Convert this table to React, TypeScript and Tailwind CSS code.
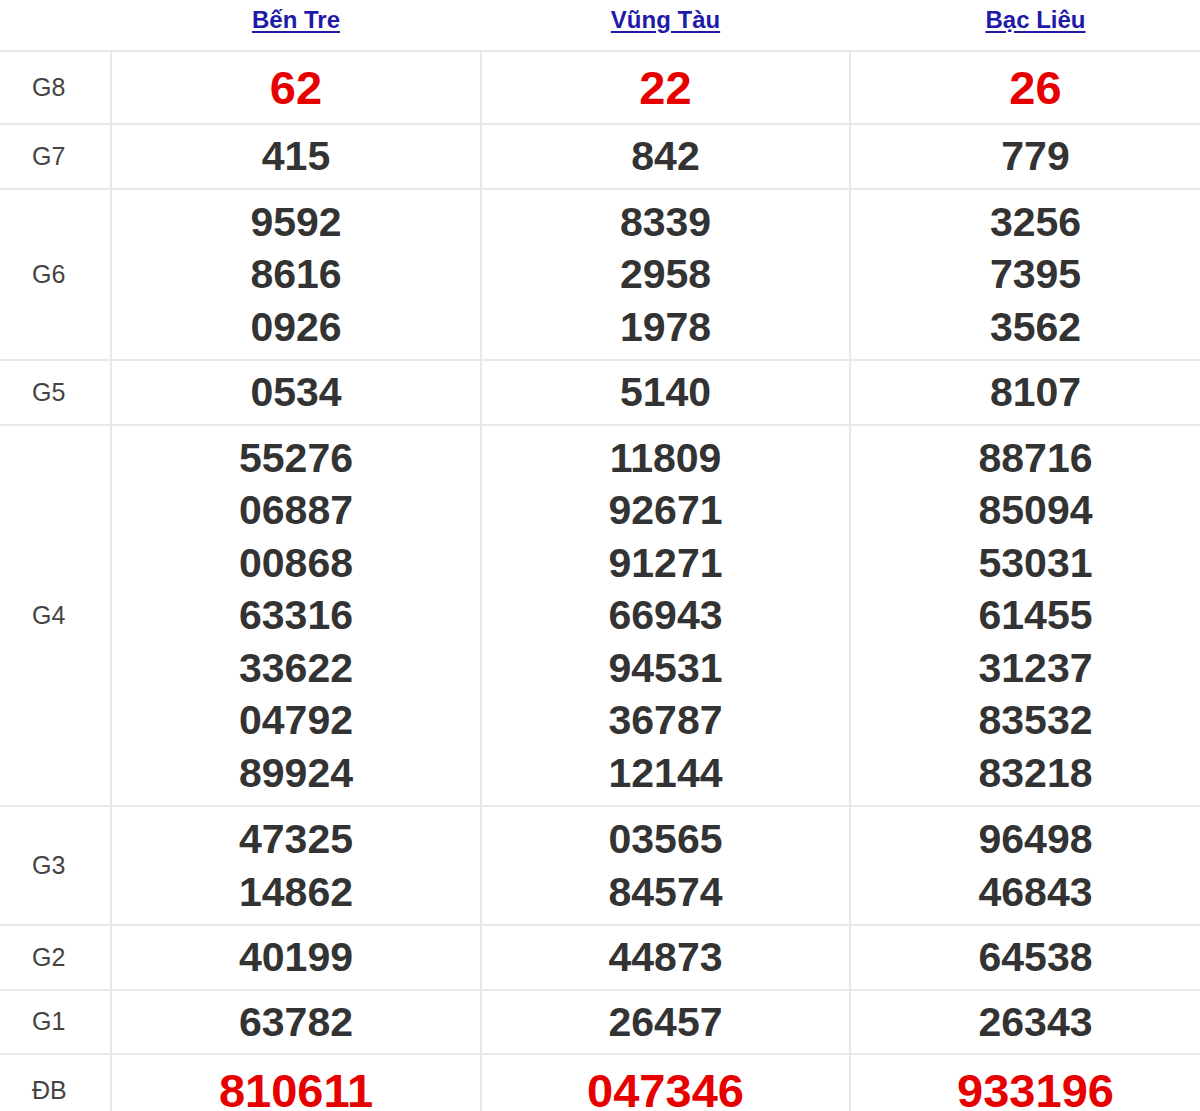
const provinces = ["Bến Tre", "Vũng Tàu", "Bạc Liêu"];

type Prize = { label: string; values: string[][]; big?: boolean };

const prizes: Prize[] = [
  { label: "G8", values: [["62"], ["22"], ["26"]], big: true },
  { label: "G7", values: [["415"], ["842"], ["779"]] },
  {
    label: "G6",
    values: [
      ["9592", "8616", "0926"],
      ["8339", "2958", "1978"],
      ["3256", "7395", "3562"],
    ],
  },
  { label: "G5", values: [["0534"], ["5140"], ["8107"]] },
  {
    label: "G4",
    values: [
      ["55276", "06887", "00868", "63316", "33622", "04792", "89924"],
      ["11809", "92671", "91271", "66943", "94531", "36787", "12144"],
      ["88716", "85094", "53031", "61455", "31237", "83532", "83218"],
    ],
  },
  {
    label: "G3",
    values: [
      ["47325", "14862"],
      ["03565", "84574"],
      ["96498", "46843"],
    ],
  },
  { label: "G2", values: [["40199"], ["44873"], ["64538"]] },
  { label: "G1", values: [["63782"], ["26457"], ["26343"]] },
  { label: "ĐB", values: [["810611"], ["047346"], ["933196"]], big: true },
];

export default function App() {
  return (
    <div className="h-[1111px] w-[1200px] overflow-hidden bg-white font-['Liberation_Sans',Arial,sans-serif]">
      <table className="w-[1221px] table-fixed border-collapse">
        <colgroup>
          <col className="w-[111px]" />
          <col className="w-[370px]" />
          <col className="w-[369px]" />
          <col className="w-[371px]" />
        </colgroup>
        <thead>
          <tr className="border-b-2 border-[#e9e9e9]">
            <th className="h-[51px]" />
            {provinces.map((p) => (
              <th key={p} className="h-[51px] pb-[11px] text-center align-middle">
                <a
                  href="#"
                  className="text-[24px] font-bold leading-[32px] text-[#1f1aa8] underline underline-offset-[3px]"
                >
                  {p}
                </a>
              </th>
            ))}
          </tr>
        </thead>
        <tbody>
          {prizes.map((row) => (
            <tr key={row.label} className="border-b-2 border-[#e9e9e9]">
              <td className="border-r-2 border-[#e9e9e9] pl-[32px] align-middle text-[25px] text-[#444]">
                {row.label}
              </td>
              {row.values.map((col, i) => (
                <td
                  key={i}
                  className={
                    "border-r-2 border-[#e9e9e9] text-center align-middle font-bold " +
                    (row.big
                      ? "py-[5px] text-[47px] leading-[61px] text-[#e60000]"
                      : col.length > 1
                        ? "py-[6px] text-[41px] leading-[52.5px] text-[#333]"
                        : "py-[5px] text-[41px] leading-[52.5px] text-[#333]")
                  }
                >
                  {col.map((v) => (
                    <div key={v}>{v}</div>
                  ))}
                </td>
              ))}
            </tr>
          ))}
        </tbody>
      </table>
    </div>
  );
}
